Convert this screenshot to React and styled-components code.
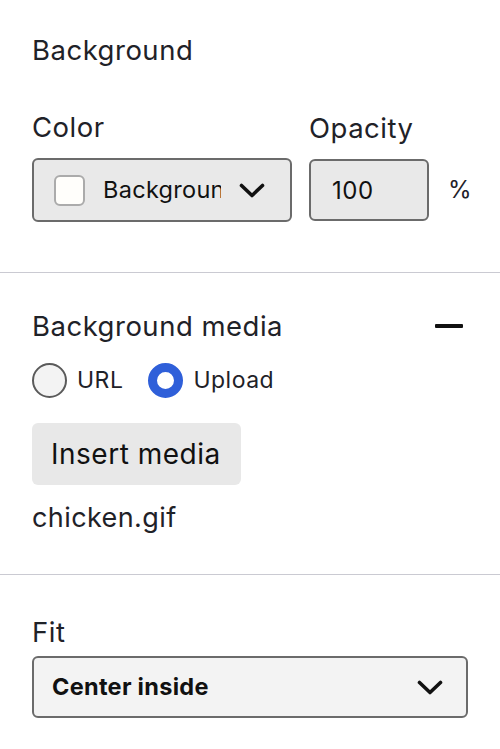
import React, { useState } from 'react';
import styled, { createGlobalStyle } from 'styled-components';

const GlobalStyle = createGlobalStyle`
    body {
        margin: 0;
        background: #ffffff;
        font-family: Inter, "Noto Sans", sans-serif;
        color: #1f2228;
    }
`;

const Panel = styled.div`
    width: 500px;
`;

const Section = styled.section`
    padding: ${(p) => p.$pad || '34px 32px 50px'};
    border-bottom: ${(p) => (p.$last ? 'none' : '1px solid #cacad2')};
`;

const Heading = styled.div`
    display: flex;
    align-items: center;
    justify-content: space-between;
    font-size: 27.5px;
    letter-spacing: 0.5px;
    line-height: 32px;
`;

const Label = styled.div`
    font-size: 27.5px;
    letter-spacing: 0.5px;
    line-height: 32px;
    margin-bottom: ${(p) => p.$gap || '15px'};
`;

const FieldRow = styled.div`
    display: flex;
    align-items: flex-end;
    margin-top: 45px;
`;

const Field = styled.div`
    display: flex;
    flex-direction: column;
    margin-right: ${(p) => p.$mr || '0'};
`;

const SelectBox = styled.div`
    box-sizing: border-box;
    display: flex;
    align-items: center;
    width: ${(p) => p.$w};
    height: ${(p) => p.$h || '64px'};
    padding: ${(p) => p.$pad || '0 25px 0 20px'};
    background: ${(p) => p.$bg || '#e9e9e9'};
    border: 2px solid #6b6b6b;
    border-radius: 6px;
    color: #111;
`;

const Swatch = styled.span`
    box-sizing: border-box;
    width: 31px;
    height: 31px;
    flex: none;
    border: 2px solid #ababab;
    border-radius: 6px;
    background: #fffefb;
    margin-right: 18px;
`;

const SelectText = styled.span`
    flex: 1;
    overflow: hidden;
    white-space: nowrap;
    font-size: ${(p) => p.$size || '23.5px'};
    font-weight: ${(p) => (p.$bold ? 700 : 400)};
    letter-spacing: 0.3px;
    line-height: 30px;
`;

const Chevron = ({ gap = 18 }) => (
    <svg width="26" height="15" viewBox="0 0 26 15" style={{ flex: 'none', marginLeft: gap }}>
        <path d="M2.5 2.5 L13 12.5 L23.5 2.5" fill="none" stroke="#111" strokeWidth="3.6" strokeLinecap="round" strokeLinejoin="round" />
    </svg>
);

const NumberInput = styled.div`
    box-sizing: border-box;
    width: 120px;
    height: 62px;
    padding: 0 21px;
    display: flex;
    align-items: center;
    background: #e9e9e9;
    border: 2px solid #6b6b6b;
    border-radius: 6px;
    font-size: 24px;
    letter-spacing: 0.5px;
    color: #111;
    margin-bottom: 1px;
`;

const Unit = styled.span`
    font-size: 24px;
    line-height: 62px;
    margin-bottom: 1px;
    color: #1f2228;
`;

const Minus = styled.span`
    width: 28px;
    height: 4px;
    background: #111;
    border-radius: 1px;
    margin-right: 5px;
`;

const RadioRow = styled.div`
    display: flex;
    align-items: center;
    margin-top: 20px;
`;

const RadioItem = styled.label`
    display: flex;
    align-items: center;
    margin-right: 25px;
    font-size: 23px;
    letter-spacing: 0.5px;
    line-height: 36px;
`;

const RadioDot = styled.span`
    box-sizing: border-box;
    width: 35px;
    height: 35px;
    border-radius: 50%;
    margin-right: 10px;
    border: ${(p) => (p.$on ? '9.5px solid #2f5fd9' : '2px solid #5a5a5a')};
    background: ${(p) => (p.$on ? '#ffffff' : '#f3f3f3')};
`;

const MediaButton = styled.button`
    display: block;
    margin-top: 25px;
    width: 209px;
    height: 62px;
    border: none;
    border-radius: 6px;
    background: #e8e8e8;
    color: #111;
    font-family: inherit;
    font-size: 28px;
    letter-spacing: 0.5px;
    text-align: left;
    padding: 0 19px;
`;

const FileName = styled.div`
    margin-top: 17px;
    font-size: 27px;
    letter-spacing: 0.4px;
    line-height: 32px;
`;

export default function App() {
    const [mode, setMode] = useState('upload');

    return (
        <Panel>
            <GlobalStyle />
            <Section>
                <Heading>Background</Heading>
                <FieldRow>
                    <Field $mr="17px">
                        <Label>Color</Label>
                        <SelectBox $w="260px">
                            <Swatch />
                            <SelectText>Background color</SelectText>
                            <Chevron />
                        </SelectBox>
                    </Field>
                    <Field $mr="19px">
                        <Label>Opacity</Label>
                        <NumberInput>100</NumberInput>
                    </Field>
                    <Unit>%</Unit>
                </FieldRow>
            </Section>
            <Section $pad="37px 32px 40px">
                <Heading>
                    Background media
                    <Minus />
                </Heading>
                <RadioRow>
                    <RadioItem onClick={() => setMode('url')}>
                        <RadioDot $on={mode === 'url'} />
                        URL
                    </RadioItem>
                    <RadioItem onClick={() => setMode('upload')}>
                        <RadioDot $on={mode === 'upload'} />
                        Upload
                    </RadioItem>
                </RadioRow>
                <MediaButton>Insert media</MediaButton>
                <FileName>chicken.gif</FileName>
            </Section>
            <Section $pad="41px 32px 30px" $last>
                <Label $gap="8px">Fit</Label>
                <SelectBox $w="436px" $h="62px" $bg="#f3f3f3" $pad="0 23px 0 18px">
                    <SelectText $bold $size="23.5px">Center inside</SelectText>
                    <Chevron />
                </SelectBox>
            </Section>
        </Panel>
    );
}
